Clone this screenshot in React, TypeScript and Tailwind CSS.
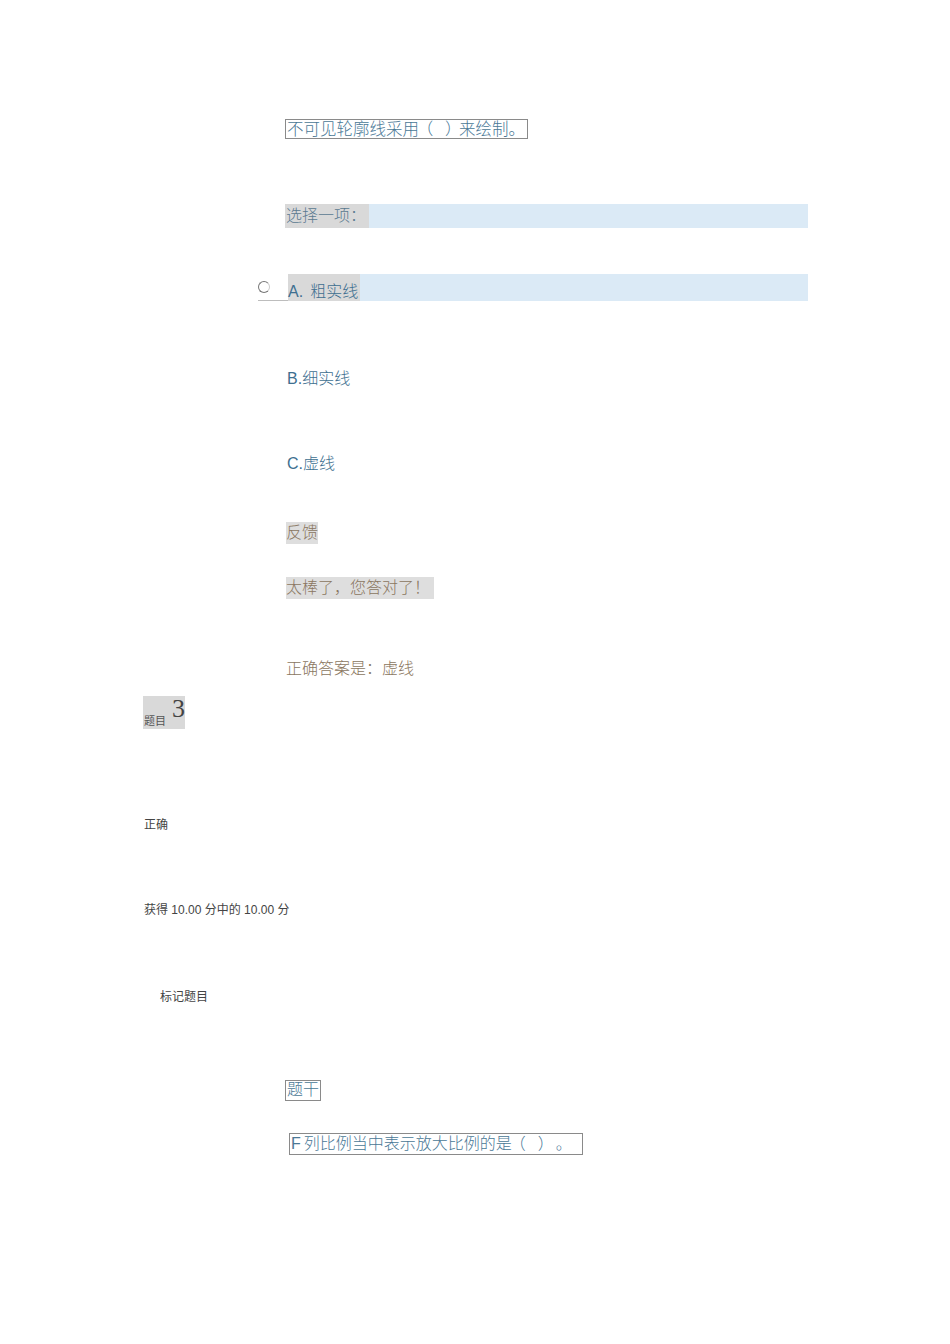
import React from 'react'

const font = { fontFamily: '"Liberation Sans", "Noto Sans CJK SC", sans-serif' }

function Paren({ ch }: { ch: string }) {
  return <span className="inline-block w-[20px] text-center [font-feature-settings:'halt']">{ch}</span>
}

export default function App() {
  return (
    <div className="relative w-[950px] h-[1344px] bg-white" style={font}>
      <div className="pt-[118px]">
        {/* question stem */}
        <div className="pl-[285px] h-[20px]">
          <span className="inline-flex items-center h-[20px] pl-[1px] pr-[2px] border border-[#8a8a8a] text-[16.5px] leading-none text-[#4a7896] font-light whitespace-nowrap">
            不可见轮廓线采用
            <Paren ch="（" />
            <Paren ch="）" />
            来绘制。
          </span>
        </div>

        {/* choose one */}
        <div className="mt-[66px] ml-[285px] w-[523px] h-[24px] bg-[#dbeaf6] flex">
          <span className="h-full bg-[#d9d9d9] px-[1px] pr-[3px] text-[16px] leading-[24px] text-[#5b7a90] font-light">
            选择一项：
          </span>
        </div>

        {/* option A */}
        <div className="mt-[46px] flex h-[27px]">
          <div className="ml-[258px] w-[30px] h-full flex flex-col justify-between border-b border-[#bdbdbd]">
            <span className="mt-[7px] w-[12px] h-[12px] rounded-full border-[1.5px] border-[#777] border-r-[#ccc] bg-white" />
          </div>
          <div className="w-[520px] h-full bg-[#dbeaf6] flex items-end">
            <span className="h-full bg-[#d9d9d9] pr-[2px] flex items-end text-[16px] leading-[18px] text-[#3e6f90]">
              A. <span className="ml-[7px] font-light">粗实线</span>
            </span>
          </div>
        </div>

        {/* option B */}
        <div className="mt-[69px] pl-[287px] h-[18px] text-[16px] leading-[18px] text-[#3e6f90]">
          B.<span className="font-light">细实线</span>
        </div>

        {/* option C */}
        <div className="mt-[67px] pl-[287px] h-[18px] text-[16px] leading-[18px] text-[#3e6f90]">
          C.<span className="font-light">虚线</span>
        </div>

        {/* feedback */}
        <div className="mt-[48px] pl-[286px] h-[22px]">
          <span className="inline-block h-[22px] bg-[#dedede] text-[16px] leading-[22px] text-[#8a7660] font-light">
            反馈
          </span>
        </div>

        <div className="mt-[33px] pl-[286px] h-[22px]">
          <span className="inline-block h-[22px] bg-[#dedede] pr-[4px] text-[16px] leading-[22px] text-[#8a7660] font-light">
            太棒了，您答对了！
          </span>
        </div>

        <div className="mt-[60px] pl-[286px] h-[20px] text-[16px] leading-[22px] text-[#8a7660] font-light">
          正确答案是：虚线
        </div>

        {/* question info */}
        <div className="mt-[18px] ml-[143px] w-[42px] h-[33px] bg-[#d9d9d9] flex items-end">
          <span className="text-[11px] leading-[14px] mb-[1px] ml-[1px] text-[#555]">题目</span>
          <span
            className="self-start ml-[6px] text-[26px] leading-[26px] text-[#444]"
            style={{ fontFamily: '"Liberation Serif", serif' }}
          >
            3
          </span>
        </div>

        <div className="mt-[89px] pl-[144px] h-[14px] text-[12px] leading-[14px] text-[#444]">正确</div>

        <div className="mt-[71px] pl-[144px] h-[14px] text-[12px] leading-[14px] text-[#444]">
          获得 10.00 分中的 10.00 分
        </div>

        <div className="mt-[73px] pl-[160px] h-[14px] text-[12px] leading-[14px] text-[#444]">标记题目</div>

        {/* next stem */}
        <div className="mt-[74px] pl-[285px] h-[21px]">
          <span className="inline-flex items-center h-[21px] px-[1px] border border-[#8a8a8a] text-[16px] leading-none text-[#4a7896] font-light">
            题干
          </span>
        </div>

        <div className="mt-[33px] pl-[289px] h-[22px]">
          <span className="inline-flex items-center h-[22px] pl-[1px] pr-[10px] border border-[#8a8a8a] text-[16px] leading-none text-[#4a7896] whitespace-nowrap">
            F
            <span className="ml-[3px] font-light">
              列比例当中表示放大比例的是
              <Paren ch="（" />
              <Paren ch="）" />
              <span className="ml-[4px]">。</span>
            </span>
          </span>
        </div>
      </div>
    </div>
  )
}
